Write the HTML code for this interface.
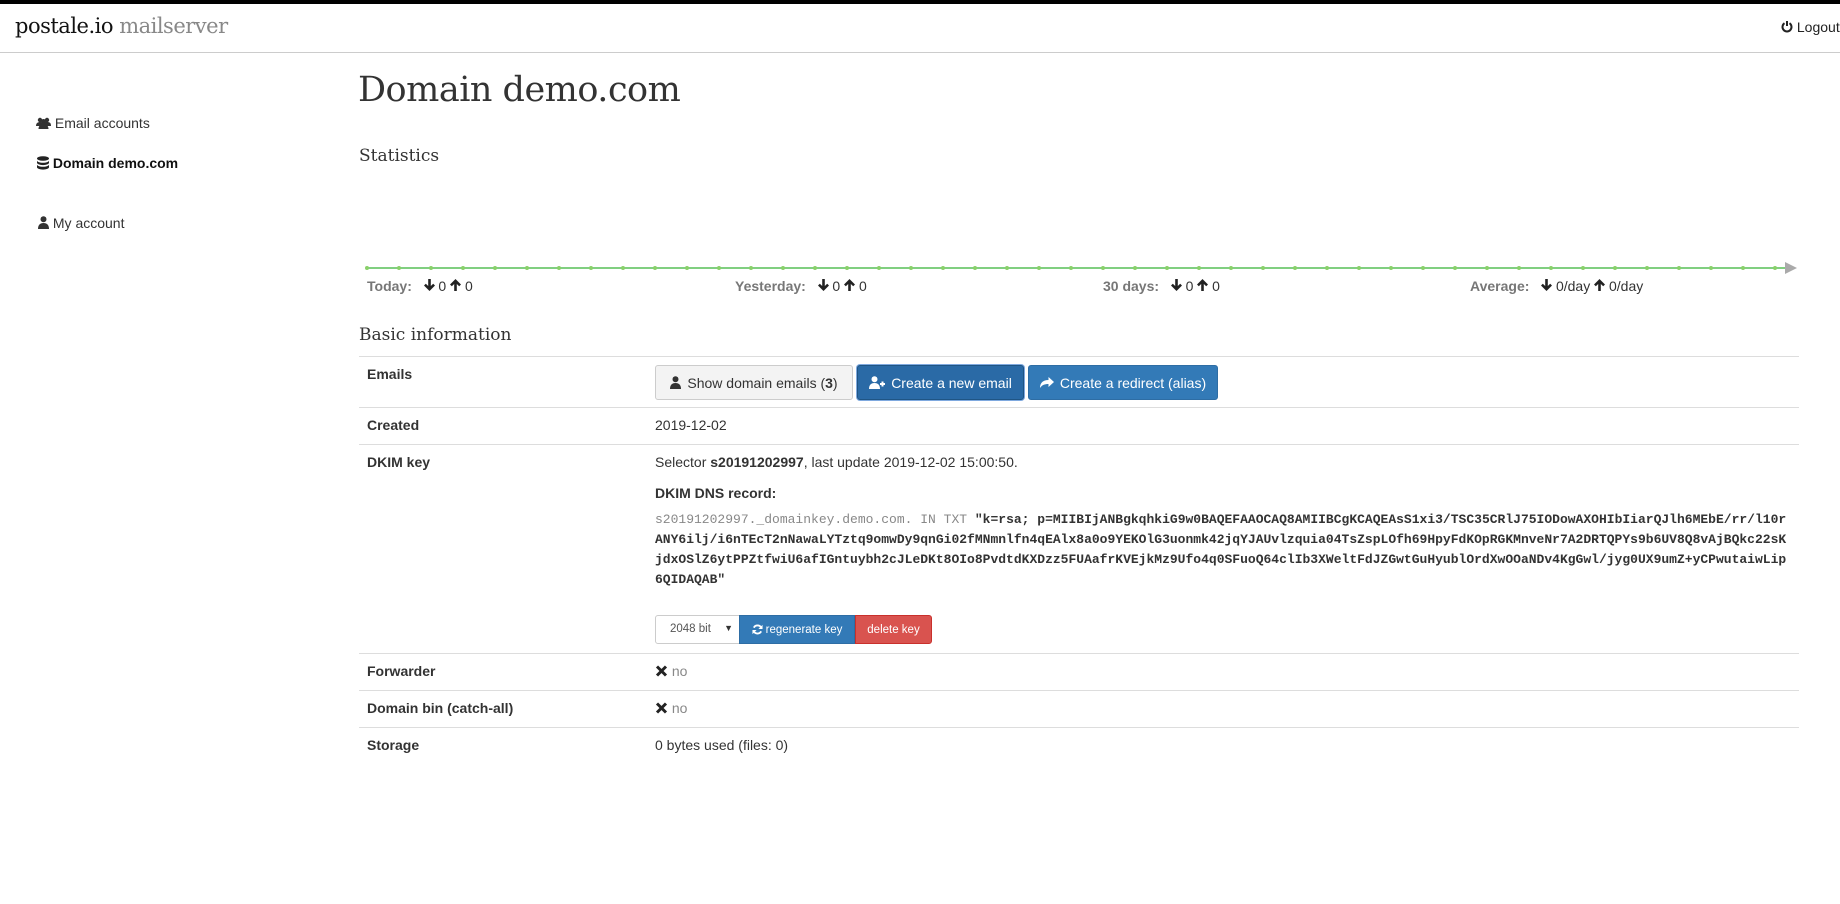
<!DOCTYPE html>
<html><head><meta charset="utf-8"><style>
*{box-sizing:border-box;margin:0;padding:0}
body{width:1840px;height:904px;background:#fff;font-family:"Liberation Sans",Arial,sans-serif;font-size:14px;color:#333;position:relative;overflow:hidden}
.a{position:absolute;white-space:nowrap}
.slab{font-family:"DejaVu Serif","Liberation Serif",serif}
.hr{position:absolute;left:359px;width:1440px;height:1px;background:#ddd}
.btn{position:absolute;height:35px;border:1px solid;border-radius:3px;font-size:14px;display:flex;align-items:center;justify-content:center;gap:6px}
.lbl{font-weight:bold;left:367px}
.mono{font-family:"Liberation Mono",monospace;font-size:13px;line-height:20px}
.sl{color:#777;font-weight:bold;font-size:14px}
svg{display:inline-block}
</style></head><body>
<div class="a" style="left:0;top:0;width:1840px;height:4px;background:#000"></div>
<div class="a" style="left:0;top:52px;width:1840px;height:1px;background:#ccc"></div>
<div class="a slab" style="left:15px;top:14px;font-size:21px;letter-spacing:-0.5px;color:#111">postale.io <span style="color:#888">mailserver</span></div>
<div class="a" style="left:1781px;top:19px;font-size:14px;color:#222"><svg width="12" height="13" viewBox="0 0 12 13" style="vertical-align:-1px"><path d="M3.5 3.2A4.5 4.5 0 1 0 8.5 3.2" fill="none" stroke="#222" stroke-width="2"/><path d="M6 1v5" stroke="#222" stroke-width="2"/></svg> Logout</div>

<div class="a" style="left:36px;top:115px;color:#333"><svg width="15" height="12" viewBox="0 0 15 12" style="vertical-align:-1px"><circle cx="4" cy="3" r="2.2" fill="#333"/><circle cx="11" cy="3" r="2.2" fill="#333"/><circle cx="7.5" cy="4.5" r="2.5" fill="#333"/><path d="M0 9c0-3 2-4 4-4s2 1 3 1 1-1 4-1 4 1 4 4zM2.5 12c0-3 2-5 5-5s5 2 5 5z" fill="#333"/></svg> Email accounts</div>
<div class="a" style="left:37px;top:155px;font-weight:bold;color:#111"><svg width="12" height="14" viewBox="0 0 12 14" style="vertical-align:-2px"><ellipse cx="6" cy="2.5" rx="6" ry="2.3" fill="#222"/><path d="M0 4.5c0 1.3 2.7 2.3 6 2.3s6-1 6-2.3v2.3c0 1.3-2.7 2.3-6 2.3S0 8 0 6.8zM0 8.5c0 1.3 2.7 2.3 6 2.3s6-1 6-2.3v2.8c0 1.3-2.7 2.3-6 2.3S0 12.6 0 11.3z" fill="#222"/></svg> Domain demo.com</div>
<div class="a" style="left:38px;top:215px;color:#333"><svg width="11" height="13" viewBox="0 0 11 13" style="vertical-align:-1px"><circle cx="5.5" cy="3.3" r="3" fill="#333"/><path d="M0 13c0-4 2-6 5.5-6S11 9 11 13z" fill="#333"/></svg> My account</div>

<div class="a slab" style="left:358px;top:70px;font-size:35px;color:#333;letter-spacing:-0.5px">Domain demo.com</div>
<div class="a slab" style="left:359px;top:146px;font-size:17px;color:#333">Statistics</div>

<svg class="a" style="left:360px;top:259px" width="1440" height="18" viewBox="0 0 1440 18">
<line x1="7" y1="9" x2="1425" y2="9" stroke="#80cf80" stroke-width="2"/>
<polygon points="1425,3 1437,9 1425,15" fill="#aaa"/>
<g fill="#8ad06a">
<circle cx="7" cy="9" r="2"/><circle cx="39" cy="9" r="2"/><circle cx="71" cy="9" r="2"/><circle cx="103" cy="9" r="2"/><circle cx="135" cy="9" r="2"/><circle cx="167" cy="9" r="2"/><circle cx="199" cy="9" r="2"/><circle cx="231" cy="9" r="2"/><circle cx="263" cy="9" r="2"/><circle cx="295" cy="9" r="2"/><circle cx="327" cy="9" r="2"/><circle cx="359" cy="9" r="2"/><circle cx="391" cy="9" r="2"/><circle cx="423" cy="9" r="2"/><circle cx="455" cy="9" r="2"/><circle cx="487" cy="9" r="2"/><circle cx="519" cy="9" r="2"/><circle cx="551" cy="9" r="2"/><circle cx="583" cy="9" r="2"/><circle cx="615" cy="9" r="2"/><circle cx="647" cy="9" r="2"/><circle cx="679" cy="9" r="2"/><circle cx="711" cy="9" r="2"/><circle cx="743" cy="9" r="2"/><circle cx="775" cy="9" r="2"/><circle cx="807" cy="9" r="2"/><circle cx="839" cy="9" r="2"/><circle cx="871" cy="9" r="2"/><circle cx="903" cy="9" r="2"/><circle cx="935" cy="9" r="2"/><circle cx="967" cy="9" r="2"/><circle cx="999" cy="9" r="2"/><circle cx="1031" cy="9" r="2"/><circle cx="1063" cy="9" r="2"/><circle cx="1095" cy="9" r="2"/><circle cx="1127" cy="9" r="2"/><circle cx="1159" cy="9" r="2"/><circle cx="1191" cy="9" r="2"/><circle cx="1223" cy="9" r="2"/><circle cx="1255" cy="9" r="2"/><circle cx="1287" cy="9" r="2"/><circle cx="1319" cy="9" r="2"/><circle cx="1351" cy="9" r="2"/><circle cx="1383" cy="9" r="2"/><circle cx="1415" cy="9" r="2"/>
</g></svg>

<div class="a" style="left:367px;top:278px"><span class="sl">Today:</span>&nbsp;&nbsp; <svg width="11" height="12" viewBox="0 0 11 12"><path d="M5.5 12L0 6.5l1.8-1.8L4.2 7V0h2.6v7l2.4-2.3L11 6.5z" fill="#222"/></svg> 0 <svg width="11" height="12" viewBox="0 0 11 12"><path d="M5.5 0L11 5.5 9.2 7.3 6.8 5v7H4.2V5L1.8 7.3 0 5.5z" fill="#222"/></svg> 0</div>
<div class="a" style="left:735px;top:278px"><span class="sl">Yesterday:</span>&nbsp;&nbsp; <svg width="11" height="12" viewBox="0 0 11 12"><path d="M5.5 12L0 6.5l1.8-1.8L4.2 7V0h2.6v7l2.4-2.3L11 6.5z" fill="#222"/></svg> 0 <svg width="11" height="12" viewBox="0 0 11 12"><path d="M5.5 0L11 5.5 9.2 7.3 6.8 5v7H4.2V5L1.8 7.3 0 5.5z" fill="#222"/></svg> 0</div>
<div class="a" style="left:1103px;top:278px"><span class="sl">30 days:</span>&nbsp;&nbsp; <svg width="11" height="12" viewBox="0 0 11 12"><path d="M5.5 12L0 6.5l1.8-1.8L4.2 7V0h2.6v7l2.4-2.3L11 6.5z" fill="#222"/></svg> 0 <svg width="11" height="12" viewBox="0 0 11 12"><path d="M5.5 0L11 5.5 9.2 7.3 6.8 5v7H4.2V5L1.8 7.3 0 5.5z" fill="#222"/></svg> 0</div>
<div class="a" style="left:1470px;top:278px"><span class="sl">Average:</span>&nbsp;&nbsp; <svg width="11" height="12" viewBox="0 0 11 12"><path d="M5.5 12L0 6.5l1.8-1.8L4.2 7V0h2.6v7l2.4-2.3L11 6.5z" fill="#222"/></svg> 0/day <svg width="11" height="12" viewBox="0 0 11 12"><path d="M5.5 0L11 5.5 9.2 7.3 6.8 5v7H4.2V5L1.8 7.3 0 5.5z" fill="#222"/></svg> 0/day</div>

<div class="a slab" style="left:359px;top:325px;font-size:17px;color:#333">Basic information</div>
<div class="hr" style="top:356px"></div>
<div class="a lbl" style="top:366px">Emails</div>
<div class="btn" style="left:655px;top:365px;width:198px;background:#f3f3f3;border-color:#ccc;color:#333"><svg width="11" height="13" viewBox="0 0 11 13"><circle cx="5.5" cy="3.3" r="3" fill="#333"/><path d="M0 13c0-4 2-6 5.5-6S11 9 11 13z" fill="#333"/></svg><span>Show domain emails (<b>3</b>)</span></div>
<div class="btn" style="left:857px;top:365px;width:167px;background:#2a6aa6;border-color:#1f5585;color:#fff;box-shadow:0 0 0 1px #7fa9df"><svg width="16" height="13" viewBox="0 0 16 13"><circle cx="5.5" cy="3.3" r="3" fill="#fff"/><path d="M0 13c0-4 2-6 5.5-6S11 9 11 13z" fill="#fff"/><path d="M11 8h5M13.5 5.5v5" stroke="#fff" stroke-width="2"/></svg>Create a new email</div>
<div class="btn" style="left:1028px;top:365px;width:190px;background:#337ab7;border-color:#2e6da4;color:#fff"><svg width="14" height="12" viewBox="0 0 14 12"><path d="M14 5L8.5 0v3C3 3 0 6 0 11c2-3 4.5-4 8.5-4v3z" fill="#fff"/></svg>Create a redirect (alias)</div>
<div class="hr" style="top:407px"></div>
<div class="a lbl" style="top:417px">Created</div>
<div class="a" style="left:655px;top:417px">2019-12-02</div>
<div class="hr" style="top:444px"></div>
<div class="a lbl" style="top:454px">DKIM key</div>
<div class="a" style="left:655px;top:454px">Selector <b>s20191202997</b>, last update 2019-12-02 15:00:50.</div>
<div class="a" style="left:655px;top:485px;font-weight:bold">DKIM DNS record:</div>
<div class="a mono" style="left:655px;top:510px"><span style="color:#888">s20191202997._domainkey.demo.com. IN TXT </span><b>"k=rsa; p=MIIBIjANBgkqhkiG9w0BAQEFAAOCAQ8AMIIBCgKCAQEAsS1xi3/TSC35CRlJ75IODowAXOHIbIiarQJlh6MEbE/rr/l10r<br>ANY6ilj/i6nTEcT2nNawaLYTztq9omwDy9qnGi02fMNmnlfn4qEAlx8a0o9YEKOlG3uonmk42jqYJAUvlzquia04TsZspLOfh69HpyFdKOpRGKMnveNr7A2DRTQPYs9b6UV8Q8vAjBQkc22sK<br>jdxOSlZ6ytPPZtfwiU6afIGntuybh2cJLeDKt8OIo8PvdtdKXDzz5FUAafrKVEjkMz9Ufo4q0SFuoQ64clIb3XWeltFdJZGwtGuHyublOrdXwOOaNDv4KgGwl/jyg0UX9umZ+yCPwutaiwLip<br>6QIDAQAB"</b></div>
<div class="a" style="left:655px;top:615px;width:85px;height:29px;border:1px solid #ccc;border-radius:3px 0 0 3px;font-size:11.5px;color:#555;padding:7px 0 0 14px">2048 bit<span style="position:absolute;right:6px;top:7px;font-size:9px;color:#333">▼</span></div>
<div class="a" style="left:739px;top:615px;width:116px;height:29px;background:#337ab7;border:1px solid #2e6da4;color:#fff;font-size:11.5px;display:flex;align-items:center;justify-content:center;gap:3px"><svg width="11" height="11" viewBox="0 0 12 12"><path d="M10 4A4.5 4.5 0 0 0 2 4M2 8a4.5 4.5 0 0 0 8 0" fill="none" stroke="#fff" stroke-width="2"/><path d="M11.5 1v4.5H7zM0.5 11V6.5H5z" fill="#fff"/></svg>regenerate key</div>
<div class="a" style="left:855px;top:615px;width:77px;height:29px;background:#d9534f;border:1px solid #c9302c;border-radius:0 3px 3px 0;color:#fff;font-size:11.5px;display:flex;align-items:center;justify-content:center">delete key</div>
<div class="hr" style="top:653px"></div>
<div class="a lbl" style="top:663px">Forwarder</div>
<div class="a" style="left:655px;top:663px;color:#888"><svg width="13" height="12" viewBox="0 0 13 12" style="vertical-align:-1px"><path d="M2 1.5l9 9M11 1.5l-9 9" stroke="#222" stroke-width="3"/></svg> no</div>
<div class="hr" style="top:690px"></div>
<div class="a lbl" style="top:700px">Domain bin (catch-all)</div>
<div class="a" style="left:655px;top:700px;color:#888"><svg width="13" height="12" viewBox="0 0 13 12" style="vertical-align:-1px"><path d="M2 1.5l9 9M11 1.5l-9 9" stroke="#222" stroke-width="3"/></svg> no</div>
<div class="hr" style="top:727px"></div>
<div class="a lbl" style="top:737px">Storage</div>
<div class="a" style="left:655px;top:737px">0 bytes used (files: 0)</div>
</body></html>
